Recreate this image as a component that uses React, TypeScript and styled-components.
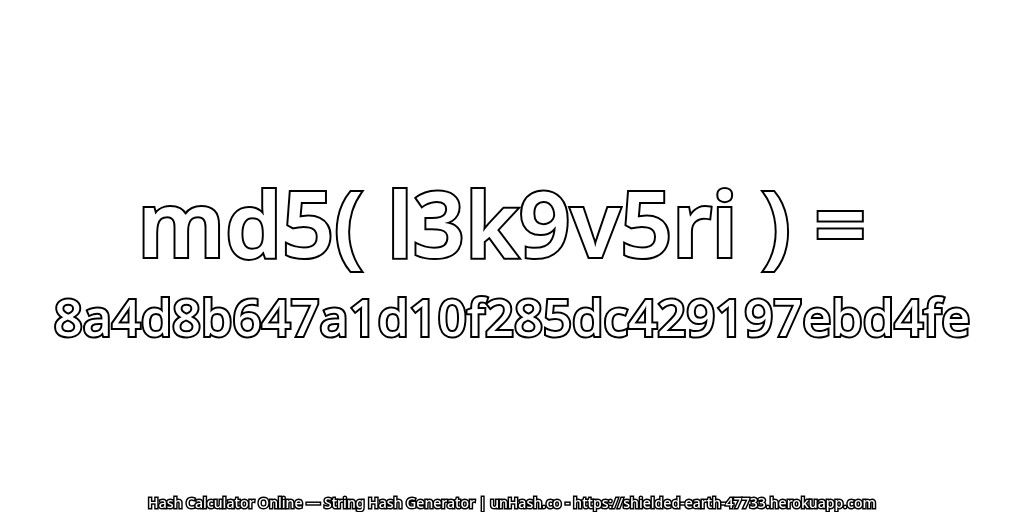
import React from "react";
import styled, { createGlobalStyle } from "styled-components";

const Global = createGlobalStyle`
  html, body { margin: 0; padding: 0; background: #fff; }
  #root { width: 1024px; height: 512px; overflow: hidden; }
`;
const Page = styled.main`
  width: 1024px; height: 512px; display: flex; flex-direction: column; align-items: center;
  font-family: "Noto Sans", sans-serif; color: #fff; white-space: nowrap; will-change: opacity;
`;
const Title = styled.div`
  margin-top: 172px; padding-right: 20px; font-size: 91px; line-height: 100px; font-weight: 600;
  -webkit-text-stroke: 4px #000; paint-order: stroke fill;
`;
const Hash = styled.div`
  margin-top: 15px; font-size: 50.7px; line-height: 60px; font-weight: 500;
  -webkit-text-stroke: 4px #000; paint-order: stroke fill;
`;
const Footer = styled.div`
  margin-top: auto; font-size: 14.1px; line-height: 18px; font-weight: 500;
  -webkit-text-stroke: 3px #000; paint-order: stroke fill;
`;
export default function App() {
  return (<><Global /><Page>
    <Title>md5( l3k9v5ri ) =</Title>
    <Hash>8a4d8b647a1d10f285dc429197ebd4fe</Hash>
    <Footer>Hash Calculator Online — String Hash Generator | unHash.co - https://shielded-earth-47733.herokuapp.com</Footer>
  </Page></>);
}
